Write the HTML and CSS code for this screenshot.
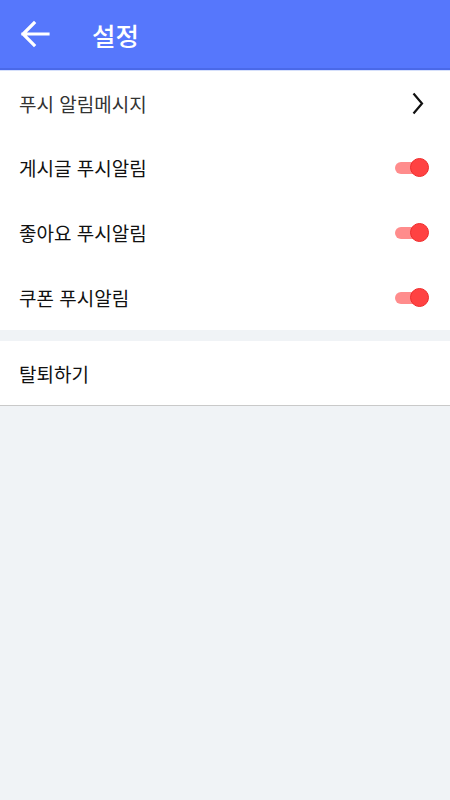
FILE: index.html
```html
<!DOCTYPE html>
<html lang="ko">
<head>
    <meta charset="UTF-8">
    <title>설정</title>
    <meta name="viewport" content="width=device-width, initial-scale=1.0">
    <link rel="stylesheet" href="styles.css">
</head>
<body>
    <header class="topbar">
        <button class="back-btn" aria-label="뒤로">
            <svg width="32" height="32" viewBox="0 0 32 32">
                <path d="M29 16H4M15 5L4 16l11 11" fill="none" stroke="#fff" stroke-width="3.2" stroke-linecap="square"/>
            </svg>
        </button>
        <h1 class="title">설정</h1>
    </header>

    <ul class="menu">
        <li class="menu-item link">
            <span class="label light">푸시 알림메시지</span>
            <svg class="chevron" width="12" height="23" viewBox="0 0 12 23">
                <path d="M1.5 1.5l8.5 10-8.5 10" fill="none" stroke="#111" stroke-width="2.2"/>
            </svg>
        </li>
        <li class="menu-item">
            <span class="label">게시글 푸시알림</span>
            <span class="toggle on"><span class="thumb"></span></span>
        </li>
        <li class="menu-item">
            <span class="label">좋아요 푸시알림</span>
            <span class="toggle on"><span class="thumb"></span></span>
        </li>
        <li class="menu-item">
            <span class="label">쿠폰 푸시알림</span>
            <span class="toggle on"><span class="thumb"></span></span>
        </li>
    </ul>

    <ul class="menu last">
        <li class="menu-item">
            <span class="label">탈퇴하기</span>
        </li>
    </ul>
</body>
</html>
```

FILE: styles.css
```css
body {
    margin: 0;
    padding: 0;
    background: #f0f3f6;
    font-family: "Noto Sans CJK KR", "Noto Sans", sans-serif;
    color: #111;
    min-height: 100vh;
}
.topbar {
    height: 68px;
    background: #5677fc;
    border-bottom: 2px solid #4a69e8;
    display: flex;
    align-items: center;
}
.back-btn {
    background: none;
    border: none;
    padding: 0;
    margin-left: 19px;
    width: 32px;
    height: 32px;
    display: flex;
    cursor: pointer;
}
.title {
    margin: 0 0 0 41px;
    color: #fff;
    font-size: 25.5px;
    font-weight: 500;
}
.menu {
    list-style: none;
    margin: 0;
    padding: 0;
    background: #fff;
}
.menu:first-of-type {
    border-top: 1px solid #d6e0fb;
    margin-bottom: 11px;
}
.menu.last {
    border-bottom: 1px solid #c9c9c9;
}
.menu.last .menu-item {
    height: 64px;
}
.menu-item {
    height: 65px;
    display: flex;
    align-items: center;
    justify-content: space-between;
    padding: 0 20px 0 19px;
}
.menu-item.link {
    height: 64px;
}
.label {
    font-size: 19px;
}
.label.light {
    color: #333;
}
.chevron {
    margin-right: 6px;
}
.toggle {
    position: relative;
    width: 33px;
    height: 12px;
    border-radius: 6px;
    background: #ff8c8c;
    margin-right: 2px;
}
.toggle .thumb {
    position: absolute;
    top: -3.5px;
    right: -1px;
    width: 19px;
    height: 19px;
    border-radius: 50%;
    background: #ff4242;
    border: 1px solid #f02a2a;
    box-sizing: border-box;
}
```
